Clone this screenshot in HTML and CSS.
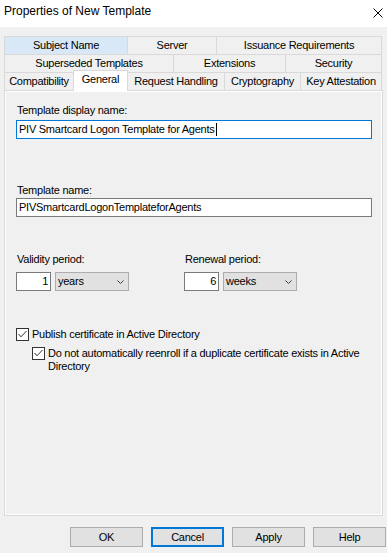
FILE: index.html
```
<!DOCTYPE html>
<html>
<head lang="en">
    <meta charset="UTF-8">
    <title>Properties of New Template</title>
    <link rel="stylesheet" href="styles.css">
</head>
<body>
<div id="titlebar">
    <span class="title">Properties of New Template</span>
    <svg class="close" width="10" height="10" viewBox="0 0 10 10"><path d="M0.5 0.5L9.5 9.5M9.5 0.5L0.5 9.5" stroke="#000" stroke-width="1"/></svg>
</div>
<div id="dialog">
    <div id="tabs">
        <div class="tab-row">
            <div class="tab hover t-subject">Subject Name</div>
            <div class="tab t-server">Server</div>
            <div class="tab t-issuance">Issuance Requirements</div>
        </div>
        <div class="tab-row">
            <div class="tab t-superseded">Superseded Templates</div>
            <div class="tab t-extensions">Extensions</div>
            <div class="tab t-security">Security</div>
        </div>
        <div class="tab-row">
            <div class="tab t-compat">Compatibility</div>
            <div class="tab current t-general">General</div>
            <div class="tab t-request">Request Handling</div>
            <div class="tab t-crypto">Cryptography</div>
            <div class="tab t-key">Key Attestation</div>
        </div>
    </div>
    <div id="panel">
        <label class="lbl lbl-display">Template display name:</label>
        <div class="textbox focused"><span>PIV Smartcard Logon Template for Agents</span><span class="caret"></span></div>

        <label class="lbl lbl-name">Template name:</label>
        <div class="textbox"><span>PIVSmartcardLogonTemplateforAgents</span></div>

        <div class="periods">
            <div class="period">
                <label class="lbl lbl-period">Validity period:</label>
                <div class="period-inputs">
                    <div class="numbox">1</div>
                    <div class="select"><span>years</span><svg width="7" height="4" viewBox="0 0 7 4"><path d="M0.5 0.5L3.5 3.5L6.5 0.5" fill="none" stroke="#3c3c3c" stroke-width="1"/></svg></div>
                </div>
            </div>
            <div class="period">
                <label class="lbl lbl-period">Renewal period:</label>
                <div class="period-inputs">
                    <div class="numbox">6</div>
                    <div class="select"><span>weeks</span><svg width="7" height="4" viewBox="0 0 7 4"><path d="M0.5 0.5L3.5 3.5L6.5 0.5" fill="none" stroke="#3c3c3c" stroke-width="1"/></svg></div>
                </div>
            </div>
        </div>

        <div class="check check-publish">
            <svg class="cb" width="13" height="13" viewBox="0 0 13 13"><rect x="0.5" y="0.5" width="12" height="12" fill="#fff" stroke="#333"/><path d="M2.5 6L5 8.8L10.5 3" fill="none" stroke="#333" stroke-width="1"/></svg>
            <span>Publish certificate in Active Directory</span>
        </div>
        <div class="check check-reenroll">
            <svg class="cb" width="13" height="13" viewBox="0 0 13 13"><rect x="0.5" y="0.5" width="12" height="12" fill="#fff" stroke="#333"/><path d="M2.5 6L5 8.8L10.5 3" fill="none" stroke="#333" stroke-width="1"/></svg>
            <span>Do not automatically reenroll if a duplicate certificate exists in Active<br>Directory</span>
        </div>
    </div>
    <div id="buttons">
        <button class="btn">OK</button>
        <button class="btn default">Cancel</button>
        <button class="btn">Apply</button>
        <button class="btn">Help</button>
    </div>
</div>
</body>
</html>
```
FILE: styles.css
```
*{
    margin: 0;
    padding: 0;
    box-sizing: border-box;
}
body{
    width: 387px;
    height: 553px;
    overflow: hidden;
    background: #f0f0f0;
    color: #000;
    font: 11px "Liberation Sans", Arial, sans-serif;
    letter-spacing: -0.25px;
}
#titlebar{
    height: 27px;
    background: #fff;
    display: flex;
    justify-content: space-between;
    align-items: flex-start;
    padding: 3px 4px 0 4px;
}
#titlebar .title{
    font-size: 12px;
    line-height: 17px;
    letter-spacing: 0;
}
#titlebar .close{
    margin-top: 5px;
}
#dialog{
    padding: 9px 0 0 4px;
}
#tabs{
    width: 378px;
}
.tab-row{
    display: flex;
    height: 18px;
}
.tab{
    height: 18px;
    border: 1px solid #d9d9d9;
    border-right: none;
    border-bottom: none;
    background: #f0f0f0;
    text-align: center;
    line-height: 17px;
    white-space: nowrap;
}
.tab:last-child{
    border-right: 1px solid #d9d9d9;
}
.tab.hover{
    background: #d9e8f6;
}
.tab.current{
    position: relative;
    z-index: 1;
    height: 21px;
    margin-top: -2px;
    background: #fff;
    border-right: 1px solid #d9d9d9;
    margin-right: -1px;
    line-height: 17px;
}
.t-subject{ width: 123px; }
.t-server{ width: 89px; }
.t-issuance{ width: 166px; }
.t-superseded{ width: 169px; }
.t-extensions{ width: 112px; }
.t-security{ width: 97px; }
.t-compat{ width: 69px; }
.t-general{ width: 55px; }
.t-request{ width: 97px; }
.t-crypto{ width: 76px; }
.t-key{ width: 82px; }

#panel{
    width: 379px;
    height: 426px;
    border: 1px solid #d9d9d9;
    box-shadow: inset 0 0 0 1px #fff;
    padding: 13px 10px 0 11px;
}
.lbl{
    display: block;
    line-height: 13px;
    padding-left: 1px;
}
.lbl-display{
    margin-bottom: 3px;
}
.lbl-name{
    margin-top: 45px;
    margin-bottom: 1px;
}
.textbox{
    height: 19px;
    border: 1px solid #7a7a7a;
    background: #fff;
    padding-left: 2px;
    line-height: 17px;
    display: flex;
    align-items: center;
    white-space: nowrap;
}
.textbox.focused{
    border-color: #0078d7;
}
.caret{
    width: 1px;
    height: 13px;
    background: #000;
    margin-left: 1px;
}
.periods{
    display: flex;
    margin-top: 36px;
}
.period{
    width: 168px;
}
.lbl-period{
    margin-bottom: 6px;
}
.period-inputs{
    display: flex;
    gap: 4px;
}
.numbox{
    width: 35px;
    height: 19px;
    border: 1px solid #7a7a7a;
    background: #fff;
    text-align: right;
    padding-right: 2px;
    line-height: 17px;
}
.select{
    width: 74px;
    height: 19px;
    border: 1px solid #adadad;
    background: #e1e1e1;
    display: flex;
    justify-content: space-between;
    align-items: center;
    padding: 0 4px 0 2px;
    line-height: 17px;
}
.check{
    display: flex;
    align-items: flex-start;
    gap: 3px;
    line-height: 13px;
}
.check .cb{
    flex: none;
}
.check-publish{
    margin-top: 37px;
}
.check-reenroll{
    margin-top: 6px;
    padding-left: 16px;
}
#buttons{
    display: flex;
    justify-content: flex-end;
    gap: 8px;
    padding-right: 1px;
    margin-top: 11px;
}
.btn{
    width: 73px;
    height: 20px;
    border: 1px solid #adadad;
    background: #e1e1e1;
    font: 11px "Liberation Sans", Arial, sans-serif;
    letter-spacing: -0.25px;
    color: #000;
    line-height: 18px;
}
.btn.default{
    border: 2px solid #0078d7;
    line-height: 16px;
}
```
